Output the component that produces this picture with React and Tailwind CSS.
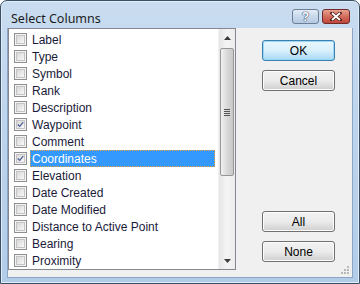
import { useState } from 'react'

const columns = [
  { name: 'Label' },
  { name: 'Type' },
  { name: 'Symbol' },
  { name: 'Rank' },
  { name: 'Description' },
  { name: 'Waypoint', checked: true },
  { name: 'Comment' },
  { name: 'Coordinates', checked: true, selected: true },
  { name: 'Elevation' },
  { name: 'Date Created' },
  { name: 'Date Modified' },
  { name: 'Distance to Active Point' },
  { name: 'Bearing' },
  { name: 'Proximity' },
]

const CheckBox = ({ checked }) => (
  <div className="w-[13px] h-[13px] shrink-0 border border-[#8e8f8f] bg-[#f4f4f4] p-[1px]">
    <div className="w-full h-full border border-[#c4c4c4] bg-gradient-to-br from-[#d8d8d8] to-[#f8f8f8] flex items-center justify-center">
      {checked && (
        <svg width="9" height="9" viewBox="0 0 9 9">
          <path d="M1 4.5 L3.5 7 L8 1.5" fill="none" stroke="#4a5f97" strokeWidth="1.6" />
        </svg>
      )}
    </div>
  </div>
)

const Button = ({ children, focused }) => (
  <button
    className={`w-[73px] h-[21px] rounded-[3px] border text-[12px] text-black leading-none ${
      focused
        ? 'border-[#3c7fb1] bg-gradient-to-b from-[#eaf6fd] via-[#d9f0fc] to-[#a7d9f5] shadow-[inset_0_0_0_1px_#9ad8f5]'
        : 'border-[#707070] bg-gradient-to-b from-[#f2f2f2] via-[#ebebeb] to-[#cfcfcf] shadow-[inset_0_0_0_1px_#fcfcfc]'
    }`}
  >
    {children}
  </button>
)

const ScrollBar = () => (
  <div className="w-[17px] h-full flex flex-col bg-gradient-to-r from-[#e6e6e6] via-[#f4f4f4] to-[#ececec] border-l border-[#f0f0f0]">
    <div className="h-[17px] flex items-center justify-center">
      <svg width="7" height="4" viewBox="0 0 7 4">
        <path d="M0 4 L3.5 0 L7 4 Z" fill="#3c3c3c" />
      </svg>
    </div>
    <div className="mt-[2px] mx-[1px] h-[128px] rounded-[2px] border border-[#979797] bg-gradient-to-r from-[#f2f2f2] via-[#d9d9d9] to-[#c8c8c8] flex items-center justify-center">
      <div className="flex flex-col gap-[1px]">
        <div className="w-[6px] h-[1px] bg-[#555]" />
        <div className="w-[6px] h-[1px] bg-[#555]" />
        <div className="w-[6px] h-[1px] bg-[#555]" />
        <div className="w-[6px] h-[1px] bg-[#555]" />
      </div>
    </div>
    <div className="flex-1" />
    <div className="h-[17px] flex items-center justify-center">
      <svg width="7" height="4" viewBox="0 0 7 4">
        <path d="M0 0 L3.5 4 L7 0 Z" fill="#3c3c3c" />
      </svg>
    </div>
  </div>
)

const App = () => {
  const [items] = useState(columns)

  return (
    <div
      className="w-[360px] h-[284px] overflow-hidden bg-white"
      style={{ fontFamily: '"Liberation Sans", Arial, sans-serif' }}
    >
      <div className="w-full h-full flex flex-col rounded-t-[7px] border border-[#3a4f66] bg-gradient-to-b from-[#c9dcf0] via-[#bcd3ec] to-[#b2cce8] shadow-[inset_0_0_0_1px_#e0ecf8]">
        {/* Title bar */}
        <div className="h-[27px] shrink-0 flex items-start pl-[10px] pr-[9px]">
          <div className="pt-[9px] text-[12.5px] text-[#1c1c1c]" style={{ fontFamily: '"Noto Sans", sans-serif' }}>
            Select Columns
          </div>
          <div className="ml-auto mt-[8px] flex gap-[3px]">
            <div className="w-[27px] h-[15px] rounded-[3px] border border-[#6d7f96] bg-gradient-to-b from-[#e3edf7] via-[#c9d9eb] to-[#b4c9e1] flex items-center justify-center">
              <span className="text-[12px] font-bold text-white leading-none [text-shadow:0_0_1px_#34476a,0_0_1px_#34476a,0_0_1px_#34476a]">?</span>
            </div>
            <div className="w-[28px] h-[15px] rounded-[3px] border border-[#6e2b28] bg-gradient-to-b from-[#e8a193] via-[#d26c5c] to-[#c0463a] flex items-center justify-center">
              <svg width="12" height="9" viewBox="0 0 12 9">
                <path d="M2 1 L10 8 M10 1 L2 8" stroke="#4b1c18" strokeWidth="3.4" strokeLinecap="square" />
                <path d="M2 1 L10 8 M10 1 L2 8" stroke="#ffffff" strokeWidth="1.8" />
              </svg>
            </div>
          </div>
        </div>

        {/* Client area */}
        <div className="flex-1 mx-[6px] mb-[5px] bg-[#f0f0f0] border-l border-r border-b border-[#8aa5c5] flex relative">
          <div className="w-[228px] h-[242px] border border-[#828790] bg-white flex overflow-hidden">
            <div className="flex-1 pt-[2px] overflow-hidden">
              {items.map((item) => (
                <div key={item.name} className="h-[17px] flex items-center pl-[5px]">
                  <CheckBox checked={item.checked} />
                  <div
                    className={`ml-[3px] h-[17px] flex items-center pl-[2px] text-[12px] ${
                      item.selected
                        ? 'w-[185px] bg-[#3399ff] text-white outline outline-1 outline-dotted outline-[#e8a040] -outline-offset-1'
                        : 'text-[#1a1a3a]'
                    }`}
                  >
                    {item.name}
                  </div>
                </div>
              ))}
              <div className="h-[17px] pl-[5px]">
                <div className="w-[13px] h-[2px] border-t border-l border-r border-[#8e8f8f]" />
              </div>
            </div>
            <ScrollBar />
          </div>

          <div className="ml-[26px] pt-[12px] flex flex-col gap-[9px]">
            <Button focused>OK</Button>
            <Button>Cancel</Button>
            <div className="h-[102px]" />
            <Button>All</Button>
            <Button>None</Button>
          </div>

          {/* size grip */}
          <svg className="absolute right-[2px] bottom-[2px]" width="10" height="10" viewBox="0 0 10 10">
            <g fill="#b8b8b8">
              <rect x="7" y="1" width="2" height="2" />
              <rect x="4" y="4" width="2" height="2" />
              <rect x="7" y="4" width="2" height="2" />
              <rect x="1" y="7" width="2" height="2" />
              <rect x="4" y="7" width="2" height="2" />
              <rect x="7" y="7" width="2" height="2" />
            </g>
          </svg>
        </div>
      </div>
    </div>
  )
}

export default App
